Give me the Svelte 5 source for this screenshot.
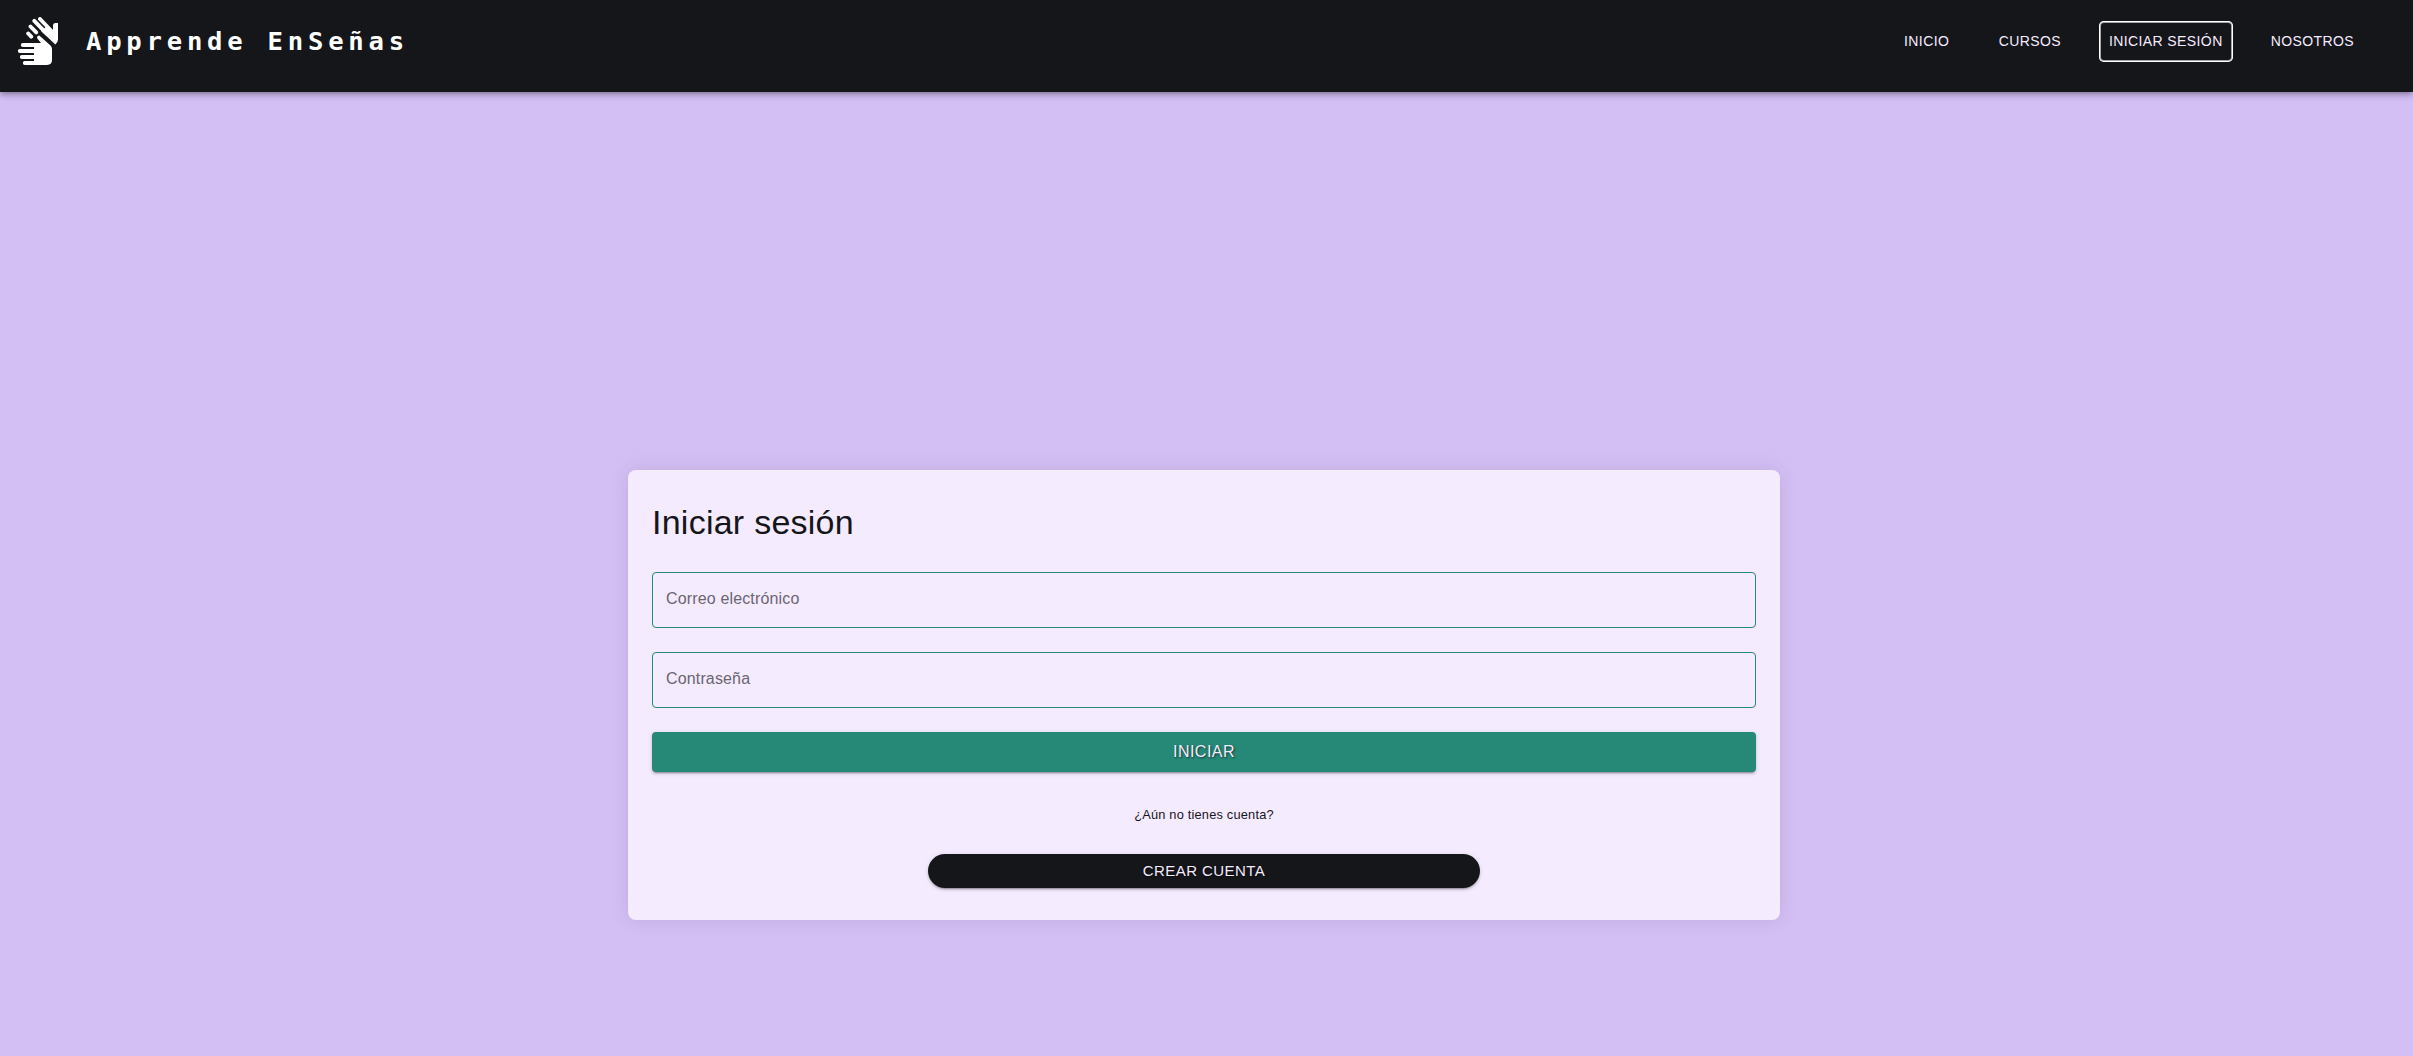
<script>
  const links = [
    { label: 'INICIO' },
    { label: 'CURSOS' },
    { label: 'INICIAR SESIÓN', active: true },
    { label: 'NOSOTROS' }
  ];
  const fields = [
    { label: 'Correo electrónico', type: 'email' },
    { label: 'Contraseña', type: 'password' }
  ];
</script>

<div class="page">
  <header>
    <div class="brand">
      <svg class="logo" viewBox="16 17 48 48" aria-hidden="true">
        <g class="fingers">
          <path d="M22.8 45H40M19.8 51H40M21.8 57H40M24.8 63H40" />
          <path d="M40 19L51 30.500M34.300 20.800L47 34M30.500 26.500L36.200 32.400M28.200 33.500L31.200 36.700" />
        </g>
        <path d="M34 43.100H41L37.300 38.500C36.500 37 37.500 35.400 39.300 35.400L50.500 45.400Q52 47 52 49V60Q52 64.900 47 64.900H34Z" />
        <path d="M47 26L53 31.500V25.500Q53 23 55.600 23H58V39.500Q58 42.500 55.300 44.500L41 31Z" />
      </svg>
      <span>Apprende EnSeñas</span>
    </div>
    <nav>
      {#each links as link}
        <button class:active={link.active}>{link.label}</button>
      {/each}
    </nav>
  </header>
  <main>
    <form class="card">
      <h1>Iniciar sesión</h1>
      {#each fields as field}
        <input type={field.type} placeholder={field.label} />
      {/each}
      <button type="button" class="submit">INICIAR</button>
      <p>¿Aún no tienes cuenta?</p>
      <button type="button" class="create">CREAR CUENTA</button>
    </form>
  </main>
</div>

<style>
  :global(body) { margin: 0; }
  * { box-sizing: border-box; }
  .page {
    height: 1056px;
    display: flex;
    flex-direction: column;
    background: #d4bff5;
    font-family: "Liberation Sans", Arial, sans-serif;
    color: #15161a;
    overflow: hidden;
  }
  header {
    flex: none;
    height: 92px;
    padding: 14px 51px 0 16px;
    display: flex;
    justify-content: space-between;
    align-items: flex-start;
    background: #15161a;
    box-shadow: 0 2px 4px -1px rgba(0,0,0,.2), 0 4px 5px rgba(0,0,0,.14), 0 1px 10px rgba(0,0,0,.12);
  }
  .brand {
    display: flex;
    align-items: center;
    gap: 22px;
    height: 54px;
    color: #fff;
    font: 700 25.6px/54px "DejaVu Sans Mono", monospace;
    letter-spacing: 4.77px;
  }
  .logo { width: 48px; height: 48px; fill: #fff; }
  .fingers { fill: none; stroke: #fff; stroke-width: 3.9; stroke-linecap: round; }
  button { font-family: inherit; border: 0; padding: 0; text-align: center; }
  nav { display: flex; gap: 30px; padding-top: 7px; }
  nav button {
    height: 41px;
    min-width: 64px;
    padding: 0 8px 2px;
    color: #f5ebff;
    background: transparent;
    font-size: 14px;
    letter-spacing: .4px;
    border-radius: 5px;
  }
  nav button:first-child { margin-right: 2px; }
  nav .active { padding: 0 10px 2px; box-shadow: inset 0 0 0 1px #fff, inset 0 0 0 2px #a5a6a9; }
  main { flex: 1; padding-top: 378px; padding-left: 628px; }
  .card {
    width: 1152px;
    height: 450px;
    padding: 24px;
    display: flex;
    flex-direction: column;
    align-items: center;
    background: #f5ebff;
    border-radius: 8px;
    box-shadow: 0 0 20px rgba(0,0,0,.1);
  }
  h1 {
    align-self: flex-start;
    margin: 7px 0 29px;
    font-weight: 400;
    font-size: 34px;
    line-height: 42px;
    letter-spacing: .25px;
  }
  input {
    width: 100%;
    height: 56px;
    flex: none;
    margin-bottom: 24px;
    padding: 0 13px 2px;
    border: 1px solid #268876;
    border-radius: 4px;
    background: transparent;
    font: 16px "Liberation Sans", Arial, sans-serif;
    letter-spacing: .15px;
  }
  input::placeholder { color: #6a6670; opacity: 1; }
  .submit, .create {
    flex: none;
    color: #f5ebff;
    text-shadow: 1px 1px 2px rgba(0,0,0,.6);
    box-shadow: 0 3px 1px -2px rgba(0,0,0,.2), 0 2px 2px rgba(0,0,0,.14), 0 1px 5px rgba(0,0,0,.12);
  }
  .submit { width: 100%; height: 40px; border-radius: 4px; background: #268876; font-size: 16px; letter-spacing: .46px; }
  p { margin: 32px 0 29px; font-size: 12.8px; line-height: 21px; letter-spacing: .2px; }
  .create { width: 552px; height: 34px; padding-bottom: 2px; border-radius: 17px; background: #15161a; font-size: 15px; letter-spacing: .43px; }
</style>
